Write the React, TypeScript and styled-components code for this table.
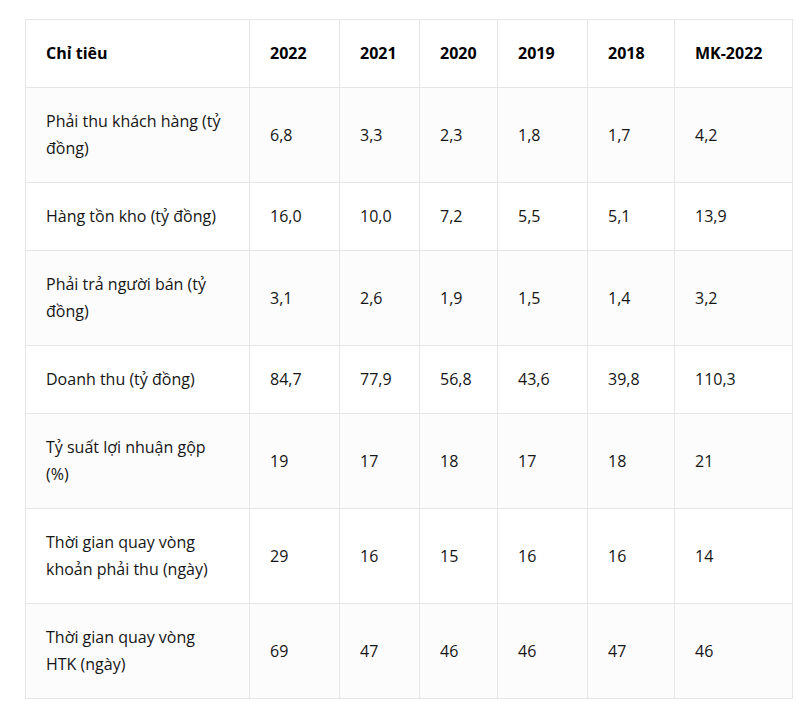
import React, { FC } from "react";
import styled, { createGlobalStyle } from "styled-components";

const GlobalStyle = createGlobalStyle`
  html, body {
    margin: 0;
    padding: 0;
    background: #ffffff;
  }
  body {
    font-family: "Open Sans", "Noto Sans", sans-serif;
  }
`;

const years = ["2022", "2021", "2020", "2019", "2018", "MK-2022"];
const colWidths = [224, 90, 80, 78, 90, 87, 118];

const rows: { label: string; values: string[] }[] = [
  { label: "Phải thu khách hàng (tỷ đồng)", values: ["6,8", "3,3", "2,3", "1,8", "1,7", "4,2"] },
  { label: "Hàng tồn kho (tỷ đồng)", values: ["16,0", "10,0", "7,2", "5,5", "5,1", "13,9"] },
  { label: "Phải trả người bán (tỷ đồng)", values: ["3,1", "2,6", "1,9", "1,5", "1,4", "3,2"] },
  { label: "Doanh thu (tỷ đồng)", values: ["84,7", "77,9", "56,8", "43,6", "39,8", "110,3"] },
  { label: "Tỷ suất lợi nhuận gộp (%)", values: ["19", "17", "18", "17", "18", "21"] },
  { label: "Thời gian quay vòng khoản phải thu (ngày)", values: ["29", "16", "15", "16", "16", "14"] },
  { label: "Thời gian quay vòng HTK (ngày)", values: ["69", "47", "46", "46", "47", "46"] },
];

const App: FC = () => {
  return (
    <Page>
      <GlobalStyle />
      <Table>
        <colgroup>
          {colWidths.map((w, i) => (
            <col key={i} style={{ width: `${w}px` }} />
          ))}
        </colgroup>
        <thead>
          <tr>
            <HeadCell>Chỉ tiêu</HeadCell>
            {years.map((y) => (
              <HeadCell key={y}>{y}</HeadCell>
            ))}
          </tr>
        </thead>
        <tbody>
          {rows.map((row, i) => (
            <Row key={row.label} $striped={i % 2 === 0}>
              <Cell>{row.label}</Cell>
              {row.values.map((v, j) => (
                <Cell key={j}>{v}</Cell>
              ))}
            </Row>
          ))}
        </tbody>
      </Table>
    </Page>
  );
};

const Page = styled("div")({
  padding: "19px 0 10px 25px",
  width: "808px",
  boxSizing: "border-box",
});

const Table = styled("table")({
  borderCollapse: "collapse",
  tableLayout: "fixed",
  width: "767px",
  color: "#151515",
  fontSize: "16px",
  lineHeight: "27px",
});

const HeadCell = styled("th")({
  padding: "20px 20px",
  border: "1px solid #e6e6e6",
  textAlign: "left",
  fontWeight: 700,
  color: "#000000",
  verticalAlign: "middle",
  background: "#ffffff",
});

const Row = styled("tr")<{ $striped: boolean }>(({ $striped }) => ({
  background: $striped ? "#fcfcfc" : "#ffffff",
}));

const Cell = styled("td")({
  padding: "20px 20px",
  border: "1px solid #e6e6e6",
  textAlign: "left",
  verticalAlign: "middle",
});

export default App;
